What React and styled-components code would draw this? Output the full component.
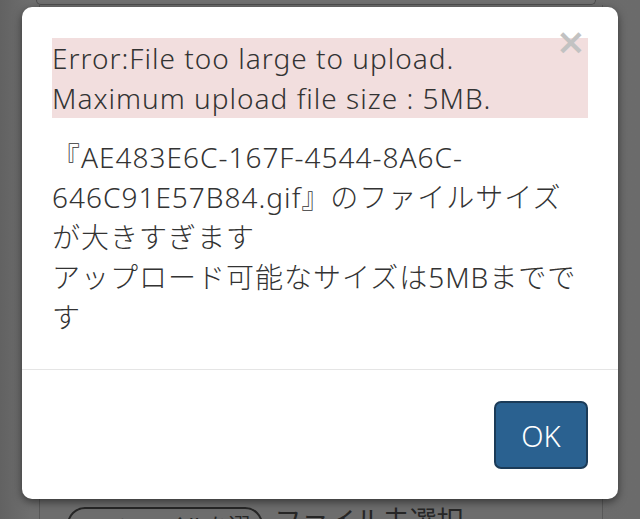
import React from 'react'
import styled, { createGlobalStyle } from 'styled-components'

const GlobalStyle = createGlobalStyle`
  html, body {
    margin: 0;
    padding: 0;
    background: #6b6b6b;
  }
  body {
    font-family: "Noto Sans", "Noto Sans CJK JP", sans-serif;
    color: #333;
  }
`

const App = () => {
  return (
    <>
      <GlobalStyle />
      <Page>
        <TopBar />
        <BehindPanel>
          <FileRow>
            <FileButton>ファイルを選択</FileButton>
            <FileLabel>ファイル未選択</FileLabel>
          </FileRow>
        </BehindPanel>
      </Page>

      <Modal>
        <Body>
          <Alert>
            <Close>×</Close>
            Error:File too large to upload.
            <br />
            Maximum upload file size : 5MB.
          </Alert>
          <Message>
            『AE483E6C-167F-4544-8A6C-646C91E57B84.gif』のファイルサイズが大きすぎます
            <br />
            アップロード可能なサイズは5MBまでです
          </Message>
        </Body>
        <Footer>
          <OkButton>OK</OkButton>
        </Footer>
      </Modal>
    </>
  )
}

export default App

const Page = styled.div`
  position: relative;
  width: 640px;
  height: 519px;
  overflow: hidden;
  background: linear-gradient(90deg, #626262 0, #6e6e6e 30px, #6b6b6b 100%);
  display: flex;
  flex-direction: column;
  align-items: center;
`

const TopBar = styled.div`
  width: 558px;
  height: 4px;
  margin-left: -8px;
  border: 1px solid #4e4e4e;
  border-top: none;
  border-radius: 0 0 6px 6px;
  background: #707070;
  flex-shrink: 0;
`

const BehindPanel = styled.div`
  width: 562px;
  margin-left: 1px;
  flex: 1;
  border-left: 1px solid #585858;
  border-right: 1px solid #585858;
  background: #6d6d6d;
  display: flex;
  flex-direction: column;
  justify-content: flex-end;
`

const FileRow = styled.div`
  display: flex;
  align-items: flex-start;
  gap: 12px;
  padding-left: 27px;
  height: 12px;
`

const FileButton = styled.div`
  width: 196px;
  height: 36px;
  box-sizing: border-box;
  border: 2px solid #262626;
  border-radius: 18px;
  font-family: "Noto Sans CJK JP", sans-serif;
  font-size: 22px;
  color: #262626;
  text-align: center;
  padding-left: 40px;
  line-height: 30px;
`

const FileLabel = styled.div`
  font-family: "Noto Sans CJK JP", sans-serif;
  font-size: 27px;
  line-height: 30px;
  color: #262626;
  margin-top: -2px;
`

const Modal = styled.div`
  position: absolute;
  left: 22px;
  top: 7px;
  width: 596px;
  background: #fff;
  border-radius: 10px;
  box-shadow: 0 3px 9px rgba(0, 0, 0, 0.5);
`

const Body = styled.div`
  padding: 31px 30px 32px;
  border-bottom: 1px solid #e5e5e5;
`

const Alert = styled.div`
  position: relative;
  background: #f2dede;
  font-size: 28px;
  line-height: 40px;
  letter-spacing: 1px;
  color: #333;
  font-weight: 300;
`

const Close = styled.span`
  position: absolute;
  right: 2px;
  top: -14px;
  font-size: 36px;
  line-height: 36px;
  font-weight: bold;
  letter-spacing: 0;
  color: #c2c2c2;
  font-family: "DejaVu Sans", sans-serif;
`

const Message = styled.div`
  margin-top: 19px;
  font-size: 28px;
  line-height: 40px;
  letter-spacing: 1px;
  color: #333;
  font-weight: 300;
  padding-right: 4px;
`

const Footer = styled.div`
  display: flex;
  justify-content: flex-end;
  padding: 31px 30px 30px;
`

const OkButton = styled.button`
  width: 94px;
  height: 68px;
  background: #2a6190;
  border: 2px solid #1b3b58;
  border-radius: 7px;
  color: #fff;
  font-family: "Noto Sans", sans-serif;
  font-weight: 300;
  font-size: 29px;
  cursor: pointer;
`
